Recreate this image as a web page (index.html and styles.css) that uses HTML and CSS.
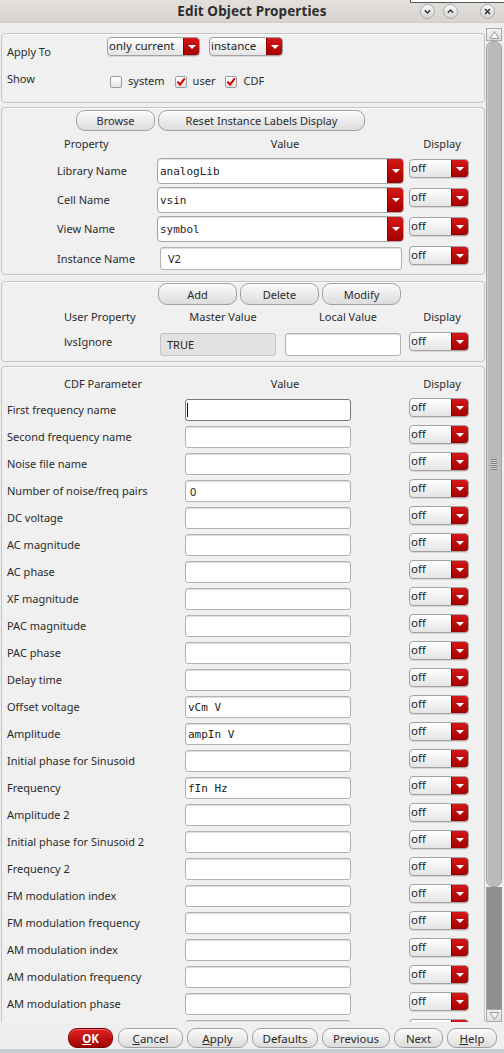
FILE: index.html
```html
<!DOCTYPE html>
<html>
<head>
<meta charset="utf-8">
<link rel="stylesheet" href="styles.css">
</head>
<body>
<div class="win">
  <header class="titlebar">
    <div></div>
    <div class="title">Edit Object Properties</div>
    <div class="wbtns">
      <svg class="wb" width="15" height="15" viewBox="0 0 15 15"><defs><linearGradient id="g1" x1="0" y1="0" x2="0" y2="1"><stop offset="0" stop-color="#fbfbfb"/><stop offset="1" stop-color="#d2d2d2"/></linearGradient></defs><circle cx="7.5" cy="7.5" r="7" fill="url(#g1)" stroke="#a9a9a9"/><path d="M4.8 6.2 L7.5 8.9 L10.2 6.2" fill="none" stroke="#333" stroke-width="1.4"/></svg>
      <svg class="wb" width="15" height="15" viewBox="0 0 15 15"><circle cx="7.5" cy="7.5" r="7" fill="url(#g1)" stroke="#a9a9a9"/><path d="M4.8 8.8 L7.5 6.1 L10.2 8.8" fill="none" stroke="#333" stroke-width="1.4"/></svg>
      <svg class="wb close" width="15" height="15" viewBox="0 0 15 15"><circle cx="7.5" cy="7.5" r="7" fill="url(#g1)" stroke="#a9a9a9"/><path d="M5 5 L10 10 M10 5 L5 10" fill="none" stroke="#333" stroke-width="1.5"/></svg>
    </div>
    <div class="notch"></div>
  </header>

  <div class="main">
    <div class="content">
      <section class="frame f1">
        <div class="f1row">
          <span class="lbl apply">Apply To</span>
          <div class="dd w93"><span class="ddt">only current</span><span class="arr"></span></div>
          <div class="dd w74"><span class="ddt">instance</span><span class="arr"></span></div>
        </div>
        <div class="f1row2">
          <span class="lbl show">Show</span>
          <span class="cb"></span><span class="cbl">system</span>
          <span class="cb on"><svg width="10" height="10" viewBox="0 0 10 10"><path d="M1.5 4.6 L4 7.6 L8.8 1.4" fill="none" stroke="#d40000" stroke-width="2"/></svg></span><span class="cbl">user</span>
          <span class="cb on"><svg width="10" height="10" viewBox="0 0 10 10"><path d="M1.5 4.6 L4 7.6 L8.8 1.4" fill="none" stroke="#d40000" stroke-width="2"/></svg></span><span class="cbl">CDF</span>
        </div>
      </section>

      <section class="frame f2">
        <div class="btnrow b2">
          <button class="btn w79">Browse</button>
          <button class="btn w207">Reset Instance Labels Display</button>
        </div>
        <div class="grid2 head">
          <span class="h-prop">Property</span>
          <span class="h-val">Value</span>
          <span class="h-disp">Display</span>
        </div>
        <div class="grid2 crow">
          <span class="lbl">Library Name</span>
          <div class="combo"><span class="ct">analogLib</span><span class="arr"></span></div>
          <div class="dd disp"><span class="ddt">off</span><span class="arr"></span></div>
        </div>
        <div class="grid2 crow">
          <span class="lbl">Cell Name</span>
          <div class="combo"><span class="ct">vsin</span><span class="arr"></span></div>
          <div class="dd disp"><span class="ddt">off</span><span class="arr"></span></div>
        </div>
        <div class="grid2 crow">
          <span class="lbl">View Name</span>
          <div class="combo"><span class="ct">symbol</span><span class="arr"></span></div>
          <div class="dd disp"><span class="ddt">off</span><span class="arr"></span></div>
        </div>
        <div class="grid2 irow">
          <span class="lbl">Instance Name</span>
          <div class="inp instin">V2</div>
          <div class="dd disp"><span class="ddt">off</span><span class="arr"></span></div>
        </div>
      </section>

      <section class="frame f3">
        <div class="btnrow b3">
          <button class="btn w79 h22">Add</button>
          <button class="btn w79 h22">Delete</button>
          <button class="btn w79 h22">Modify</button>
        </div>
        <div class="grid3 head3">
          <span>User Property</span>
          <span class="c">Master Value</span>
          <span class="c">Local Value</span>
          <span class="d">Display</span>
        </div>
        <div class="grid3 urow">
          <span class="lbl">lvsIgnore</span>
          <div class="inp ro">TRUE</div>
          <div class="inp loc"></div>
          <div class="dd disp"><span class="ddt">off</span><span class="arr"></span></div>
        </div>
      </section>

      <section class="frame f4">
        <div class="grid4 head4">
          <span class="hp">CDF Parameter</span>
          <span class="hv">Value</span>
          <span class="hd">Display</span>
        </div>
        <div class="rows">
          <div class="grid4 prow"><span class="lbl">First frequency name</span><div class="inp focus"><span class="caret"></span></div><div class="dd disp"><span class="ddt">off</span><span class="arr"></span></div></div>
          <div class="grid4 prow"><span class="lbl">Second frequency name</span><div class="inp"></div><div class="dd disp"><span class="ddt">off</span><span class="arr"></span></div></div>
          <div class="grid4 prow"><span class="lbl">Noise file name</span><div class="inp"></div><div class="dd disp"><span class="ddt">off</span><span class="arr"></span></div></div>
          <div class="grid4 prow"><span class="lbl">Number of noise/freq pairs</span><div class="inp">0</div><div class="dd disp"><span class="ddt">off</span><span class="arr"></span></div></div>
          <div class="grid4 prow"><span class="lbl">DC voltage</span><div class="inp"></div><div class="dd disp"><span class="ddt">off</span><span class="arr"></span></div></div>
          <div class="grid4 prow"><span class="lbl">AC magnitude</span><div class="inp"></div><div class="dd disp"><span class="ddt">off</span><span class="arr"></span></div></div>
          <div class="grid4 prow"><span class="lbl">AC phase</span><div class="inp"></div><div class="dd disp"><span class="ddt">off</span><span class="arr"></span></div></div>
          <div class="grid4 prow"><span class="lbl">XF magnitude</span><div class="inp"></div><div class="dd disp"><span class="ddt">off</span><span class="arr"></span></div></div>
          <div class="grid4 prow"><span class="lbl">PAC magnitude</span><div class="inp"></div><div class="dd disp"><span class="ddt">off</span><span class="arr"></span></div></div>
          <div class="grid4 prow"><span class="lbl">PAC phase</span><div class="inp"></div><div class="dd disp"><span class="ddt">off</span><span class="arr"></span></div></div>
          <div class="grid4 prow"><span class="lbl">Delay time</span><div class="inp"></div><div class="dd disp"><span class="ddt">off</span><span class="arr"></span></div></div>
          <div class="grid4 prow"><span class="lbl">Offset voltage</span><div class="inp mono">vCm V</div><div class="dd disp"><span class="ddt">off</span><span class="arr"></span></div></div>
          <div class="grid4 prow"><span class="lbl">Amplitude</span><div class="inp mono">ampIn V</div><div class="dd disp"><span class="ddt">off</span><span class="arr"></span></div></div>
          <div class="grid4 prow"><span class="lbl">Initial phase for Sinusoid</span><div class="inp"></div><div class="dd disp"><span class="ddt">off</span><span class="arr"></span></div></div>
          <div class="grid4 prow"><span class="lbl">Frequency</span><div class="inp mono">fIn Hz</div><div class="dd disp"><span class="ddt">off</span><span class="arr"></span></div></div>
          <div class="grid4 prow"><span class="lbl">Amplitude 2</span><div class="inp"></div><div class="dd disp"><span class="ddt">off</span><span class="arr"></span></div></div>
          <div class="grid4 prow"><span class="lbl">Initial phase for Sinusoid 2</span><div class="inp"></div><div class="dd disp"><span class="ddt">off</span><span class="arr"></span></div></div>
          <div class="grid4 prow"><span class="lbl">Frequency 2</span><div class="inp"></div><div class="dd disp"><span class="ddt">off</span><span class="arr"></span></div></div>
          <div class="grid4 prow"><span class="lbl">FM modulation index</span><div class="inp"></div><div class="dd disp"><span class="ddt">off</span><span class="arr"></span></div></div>
          <div class="grid4 prow"><span class="lbl">FM modulation frequency</span><div class="inp"></div><div class="dd disp"><span class="ddt">off</span><span class="arr"></span></div></div>
          <div class="grid4 prow"><span class="lbl">AM modulation index</span><div class="inp"></div><div class="dd disp"><span class="ddt">off</span><span class="arr"></span></div></div>
          <div class="grid4 prow"><span class="lbl">AM modulation frequency</span><div class="inp"></div><div class="dd disp"><span class="ddt">off</span><span class="arr"></span></div></div>
          <div class="grid4 prow"><span class="lbl">AM modulation phase</span><div class="inp"></div><div class="dd disp"><span class="ddt">off</span><span class="arr"></span></div></div>
          <div class="grid4 prow"><span class="lbl"></span><div class="inp"></div><div class="dd disp"><span class="ddt"></span><span class="arr"></span></div></div>
        </div>
      </section>
    </div>

    <div class="sb">
      <div class="sbbtn up"><svg width="13" height="12" viewBox="0 0 13 12"><path d="M2 9.5 L6.5 2.5 L11 9.5 Z" fill="#f4f4f4" stroke="#9c9c9c"/></svg></div>
      <div class="thumb"><span class="grip"></span></div>
      <div class="track"></div>
      <div class="sbbtn down"><svg width="13" height="12" viewBox="0 0 13 12"><path d="M2 2.5 L6.5 9.5 L11 2.5 Z" fill="#f4f4f4" stroke="#9c9c9c"/></svg></div>
    </div>
  </div>

  <footer class="footer">
    <button class="btn fb ok"><u>O</u>K</button>
    <button class="btn fb w65"><u>C</u>ancel</button>
    <button class="btn fb w61"><u>A</u>pply</button>
    <button class="btn fb w66">Defaults</button>
    <button class="btn fb w68">Previous</button>
    <button class="btn fb w49">Next</button>
    <button class="btn fb w50"><u>H</u>elp</button>
  </footer>
  <div class="strip"></div>
</div>
</body>
</html>
```

FILE: styles.css
```css
* { box-sizing: border-box; }
html, body { margin: 0; padding: 0; }
body {
  width: 504px;
  height: 1053px;
  overflow: hidden;
  background: #efefef;
  font-family: "Noto Sans", "Open Sans", sans-serif;
  font-size: 11px;
  color: #2b2b2b;
}
.win { width: 504px; height: 1053px; display: flex; flex-direction: column; }

/* title bar */
.titlebar {
  position: relative;
  height: 23px;
  flex: none;
  display: grid;
  grid-template-columns: 1fr auto 1fr;
  align-items: center;
  background: linear-gradient(#e2dfdc, #d8d5d1);
  border-bottom: 1px solid #cfccc8;
}
.title { font-weight: bold; font-size: 13.5px; color: #2e2e2e; letter-spacing: 0.1px; }
.wbtns { display: flex; justify-content: flex-end; align-items: center; padding-right: 9px; gap: 8px; }
.wb { display: block; }
.wb.close { margin-left: 14px; }
.notch {
  position: absolute; top: 0; right: 0; width: 94px; height: 3px;
  background: #fff; border-left: 1px solid #555; border-bottom: 1px solid #555;
}

/* main area */
.main { height: 999px; flex: none; display: flex; }
.content { width: 486px; height: 999px; overflow: hidden; padding-top: 10px; }

.frame {
  margin-left: 1px;
  width: 484px;
  border: 1px solid #c3c3c3;
  border-radius: 4px;
  background: #f0f0f0;
  box-shadow: inset 0 1px 0 #fafafa;
}
.f1 { height: 70px; padding: 3px 0 0 5px; }
.f2 { height: 168px; margin-top: 4px; padding-top: 2px; }
.f3 { height: 81px; margin-top: 6px; padding-top: 1px; }
.f4 { margin-top: 4px; padding-top: 9px; height: 1000px; }

.lbl { color: #2b2b2b; white-space: nowrap; }

/* frame 1 */
.f1row { display: flex; align-items: flex-start; height: 19px; }
.apply { width: 100px; margin-top: 9px; line-height: 12px; }
.w93 { width: 93px; }
.w74 { width: 74px; margin-left: 9px; }
.f1row2 { display: flex; align-items: center; margin-top: 17px; height: 14px; }
.show { width: 103px; margin-top: -4px; }
.cb {
  width: 12px; height: 12px; border: 1px solid #9d9d9d; border-radius: 2px;
  background: linear-gradient(#ffffff, #e3e3e3);
  display: flex; align-items: center; justify-content: center;
  margin-top: 3px;
}
.cbl { margin-left: 6px; margin-right: 10px; margin-top: 1px; }

/* dropdowns */
.dd {
  display: flex; height: 19px;
  border: 1px solid #a2a2a2; border-radius: 4px;
  background: linear-gradient(#ffffff, #e4e4e4);
  overflow: hidden;
  box-shadow: 0 1px 0 #d8d8d8;
}
.ddt { flex: 1; padding-left: 1px; line-height: 15px; color: #222; font-size: 11.5px; }
.arr {
  width: 16px; flex: none;
  background: linear-gradient(#d61717, #a40000);
  border-left: 1px solid #8e0000;
  position: relative;
}
.arr::after {
  content: ""; position: absolute; left: 50%; top: 50%;
  margin-left: -4px; margin-top: -2px;
  border-left: 4px solid transparent; border-right: 4px solid transparent;
  border-top: 4px solid #fff;
}
.disp { width: 60px; }
.disp .arr { width: 17px; }

/* buttons */
.btn {
  font-family: "Noto Sans", "Open Sans", sans-serif;
  font-size: 11px; color: #2b2b2b;
  height: 21px; padding: 0;
  border: 1px solid #a0a0a0; border-radius: 9px;
  background: linear-gradient(#fbfbfb, #dcdcdc);
  box-shadow: inset 0 1px 0 #fff;
}
.h22 { height: 22px; }
.w79 { width: 79px; }
.w207 { width: 207px; }
.btnrow { display: flex; gap: 3px; }
.b2 { padding-left: 74px; }
.b3 { padding-left: 156px; }

/* frame 2 grid */
.grid2 {
  display: grid;
  grid-template-columns: 100px 247px 65px;
  padding-left: 55px;
}
.grid2 .disp { margin-left: 5px; }
.head { margin-top: 5px; height: 15px; line-height: 15px; }
.h-prop { padding-left: 7px; }
.h-val { text-align: center; padding-left: 9px; }
.h-disp { text-align: center; padding-left: 11px; }
.grid2.head + .crow { margin-top: 7px; }
.crow { height: 26px; margin-top: 3px; align-items: start; }
.crow .lbl { line-height: 26px; }
.crow .disp { margin-top: 1px; }
.combo {
  display: flex; height: 26px;
  border: 1px solid #a6a6a6; border-radius: 4px;
  background: #fff; overflow: hidden;
  box-shadow: inset 0 1px 1px #e0e0e0;
}
.ct { flex: 1; padding-left: 2px; line-height: 25px; font-family: "DejaVu Sans Mono", "Liberation Mono", monospace; font-size: 11px; color: #222; }
.combo .arr { width: 16px; }
.irow { margin-top: 5px; height: 23px; align-items: start; }
.irow .lbl { line-height: 23px; }
.irow .disp { margin-top: -1px; }
.instin { margin-left: 3px; width: 242px; }

/* inputs */
.inp {
  height: 23px;
  border: 1px solid #b2b2b2; border-radius: 3px;
  background: #fff;
  box-shadow: inset 0 1px 1px #dcdcdc;
  padding-left: 7px; line-height: 22px; color: #222;
  font-size: 11px;
}
.inp.ro { background: #e2e2e2; border-color: #c4c4c4; box-shadow: none; padding-left: 6px; }
.inp.mono { font-family: "DejaVu Sans Mono", "Liberation Mono", monospace; padding-left: 2px; }
.inp.focus { border-color: #7a7a7a; box-shadow: none; }
.caret { display: block; width: 1px; height: 14px; background: #111; margin-top: 3px; margin-left: -3px; }

/* frame 3 grid */
.grid3 {
  display: grid;
  grid-template-columns: 96px 125px 124px 60px;
  padding-left: 62px;
}
.head3 { margin-top: 4px; height: 15px; line-height: 15px; }
.head3 .c { width: 116px; text-align: center; padding-left: 10px; white-space: nowrap; }
.head3 .d { text-align: center; padding-left: 6px; }
.urow { margin-top: 9px; height: 23px; align-items: start; }
.urow .inp { width: 116px; }
.urow .lbl { line-height: 17px; }
.urow .disp { margin-top: -1px; }

/* frame 4 */
.grid4 {
  display: grid;
  grid-template-columns: 178px 224px 60px;
  padding-left: 5px;
}
.head4 { height: 15px; line-height: 15px; }
.hp { padding-left: 57px; }
.hv { width: 166px; text-align: center; padding-left: 34px; }
.hd { text-align: center; padding-left: 6px; }
.rows { margin-top: 7px; }
.prow { height: 27px; align-items: start; }
.prow .lbl { margin-top: 1px; line-height: 22px; }
.prow .inp { width: 166px; margin-top: 1px; height: 22px; line-height: 21px; padding-left: 4px; }
.prow .inp.mono { padding-left: 2px; }
.prow .disp { margin-top: 0px; }

/* scrollbar */
.sb {
  width: 18px; height: 999px;
  padding-top: 5px;
  display: flex; flex-direction: column;
  padding-right: 2px;
}
.sbbtn {
  height: 13px; flex: none;
  background: linear-gradient(#f2f2f2, #dedede);
  border: 1px solid #a8a8a8;
  display: flex; align-items: center; justify-content: center;
}
.thumb {
  height: 846px; flex: none;
  background: #bababa;
  border: 1px solid #a4a4a4;
  border-radius: 7px;
  display: flex; align-items: center; justify-content: center;
  box-shadow: inset 1px 0 0 #cfcfcf;
}
.grip {
  width: 6px; height: 11px;
  background: repeating-linear-gradient(#7a7a7a 0 1px, #d6d6d6 1px 2px);
}
.track { flex: 1; background: #8f8f8f; border-left: 1px solid #9e9e9e; }

/* footer */
.footer {
  height: 27px; flex: none;
  display: flex; justify-content: flex-end; gap: 4px;
  padding: 6px 7px 0 0;
  background: #efefef;
}
.fb { height: 20px; font-size: 11.5px; }
.ok {
  width: 45px; color: #fff; font-weight: bold;
  background: linear-gradient(#e02424, #a20000);
  border-color: #7d0000;
  box-shadow: inset 0 1px 0 #ef6a6a;
}
.w65 { width: 65px; margin-left: 1px; }
.w61 { width: 61px; }
.w66 { width: 66px; }
.w68 { width: 68px; }
.w49 { width: 49px; }
.w50 { width: 50px; }
.strip { height: 4px; flex: none; background: #c8cdd3; }
```
